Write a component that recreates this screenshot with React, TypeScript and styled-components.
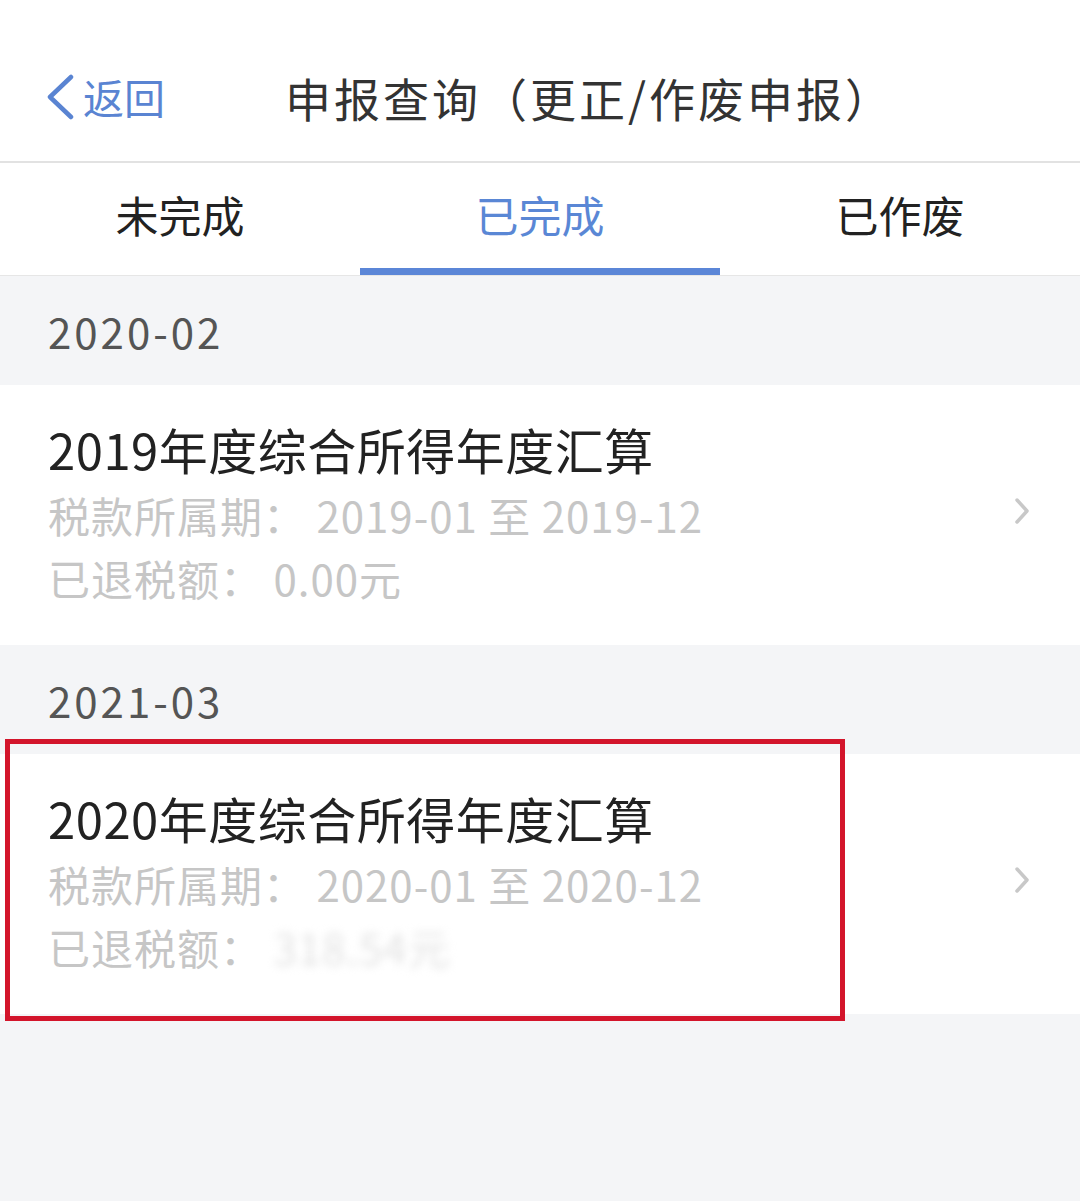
import React, { type ReactElement } from 'react';
import styled, { createGlobalStyle } from 'styled-components';

const GlobalStyle = createGlobalStyle`
  html, body {
    margin: 0;
    padding: 0;
    background: #f4f5f7;
  }
  body {
    font-family: "Noto Sans CJK SC", "Noto Sans", sans-serif;
  }
`;

interface IRecord {
  month: string;
  title: string;
  period: string;
  refund: string;
  blurred?: boolean;
  marked?: boolean;
}

const records: IRecord[] = [
  {
    month: '2020-02',
    title: '2019年度综合所得年度汇算',
    period: '2019-01 至 2019-12',
    refund: '0.00',
  },
  {
    month: '2021-03',
    title: '2020年度综合所得年度汇算',
    period: '2020-01 至 2020-12',
    refund: '318.54',
    blurred: true,
    marked: true,
  },
];

const tabs = ['未完成', '已完成', '已作废'];

const ChevronLeft = (): ReactElement => (
  <svg width="30" height="46" viewBox="0 0 30 46">
    <polyline points="26,3 5,23 26,43" fill="none" stroke="#5a84d2" strokeWidth="4.5" strokeLinecap="round" strokeLinejoin="round" />
  </svg>
);

const ChevronRight = (): ReactElement => (
  <svg width="16" height="28" viewBox="0 0 16 28">
    <polyline points="3,3 13,14 3,25" fill="none" stroke="#c8c8c8" strokeWidth="3.5" strokeLinecap="round" strokeLinejoin="round" />
  </svg>
);

export default function App(): ReactElement {
  return (
    <Page>
      <GlobalStyle />
      <NavBar>
        <BackButton>
          <ChevronLeft />
          <BackText>返回</BackText>
        </BackButton>
        <NavTitle>申报查询（更正/作废申报）</NavTitle>
      </NavBar>
      <TabBar>
        {tabs.map((t, i) => (
          <Tab key={t} $active={i === 1}>
            {t}
          </Tab>
        ))}
      </TabBar>
      {records.map((r) => (
        <Section key={r.month}>
          <MonthHeader>{r.month}</MonthHeader>
          <Item>
            {r.marked && <Marker />}
            <ItemInfo>
              <ItemTitle>{r.title}</ItemTitle>
              <ItemLine>税款所属期：&nbsp;{r.period}</ItemLine>
              <ItemLine>
                已退税额：&nbsp;
                {r.blurred ? <Blurred>{r.refund}元</Blurred> : `${r.refund}元`}
              </ItemLine>
            </ItemInfo>
            <ArrowWrap>
              <ChevronRight />
            </ArrowWrap>
          </Item>
        </Section>
      ))}
    </Page>
  );
}

const Page = styled.div`
  width: 1080px;
  min-height: 1201px;
  background: #f4f5f7;
`;

const NavBar = styled.div`
  height: 163px;
  background: #fff;
  display: flex;
  align-items: center;
  padding-left: 45px;
  column-gap: 120px;
  border-bottom: 2px solid #e2e2e2;
  box-sizing: border-box;
  padding-top: 32px;
`;

const BackButton = styled.div`
  display: flex;
  align-items: center;
  column-gap: 8px;
`;

const BackText = styled.span`
  font-size: 41px;
  color: #5a84d2;
  line-height: 1;
`;

const NavTitle = styled.div`
  font-size: 46px;
  color: #333;
  line-height: 1;
  letter-spacing: 3px;
`;

const TabBar = styled.div`
  display: grid;
  grid-template-columns: repeat(3, 1fr);
  height: 113px;
  background: #fff;
  border-bottom: 1px solid #e6e6e6;
  box-sizing: border-box;
`;

const Tab = styled.div<{ $active?: boolean }>`
  display: flex;
  align-items: center;
  justify-content: center;
  padding-bottom: 4px;
  font-size: 43px;
  color: ${(p) => (p.$active ? '#5a87d5' : '#222')};
  border-bottom: 7px solid ${(p) => (p.$active ? '#5b86d7' : 'transparent')};
`;

const Section = styled.div`
  display: flex;
  flex-direction: column;
`;

const MonthHeader = styled.div`
  height: 109px;
  display: flex;
  align-items: center;
  padding-left: 48px;
  font-size: 42px;
  color: #555;
  letter-spacing: 3px;
`;

const Item = styled.div`
  position: relative;
  height: 260px;
  background: #fff;
  display: flex;
  align-items: center;
  padding: 0 48px;
  box-sizing: border-box;
`;

const Marker = styled.div`
  position: absolute;
  left: 5px;
  top: -15px;
  width: 840px;
  height: 282px;
  border: 5px solid #d3152b;
  box-sizing: border-box;
`;

const ItemInfo = styled.div`
  flex: 1;
  display: flex;
  flex-direction: column;
  padding-bottom: 6px;
`;

const ItemTitle = styled.div`
  font-size: 49px;
  line-height: 68px;
  color: #222;
  letter-spacing: 0.5px;
`;

const ItemLine = styled.div`
  font-size: 42px;
  line-height: 63px;
  color: #c6c6c6;
  letter-spacing: 1px;
`;

const Blurred = styled.span`
  display: inline-block;
  filter: blur(4px);
  color: #e2e2e2;
`;

const ArrowWrap = styled.div`
  display: flex;
  align-items: center;
  margin-right: 2px;
  margin-top: -8px;
`;
